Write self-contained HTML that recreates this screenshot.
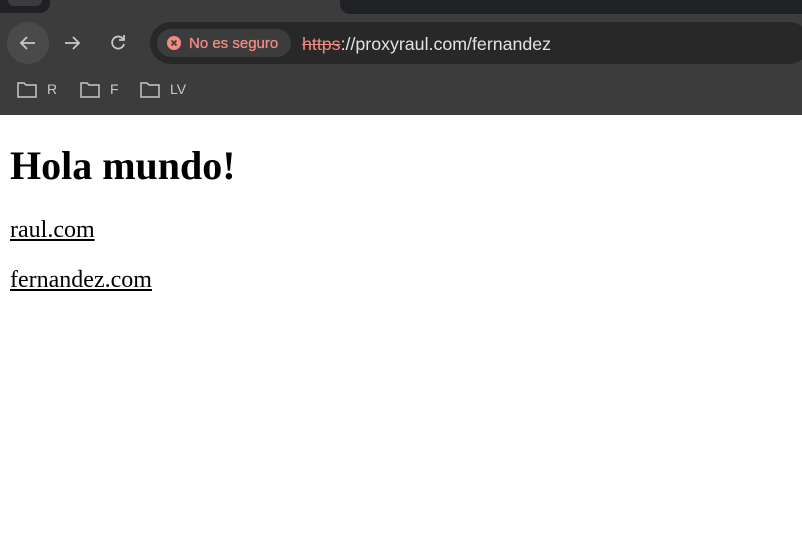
<!DOCTYPE html>
<html><head><style>
body{margin:0;width:802px;height:546px;position:relative;overflow:hidden;background:#fff;font-family:"Liberation Serif",serif}
.abs{position:absolute}
.ui{font-family:"Liberation Sans",sans-serif}
a{color:#000}
</style></head><body>
<div class="abs" style="left:0;top:0;width:802px;height:115px;background:#3c3c3c"></div>
<div class="abs" style="left:340px;top:0;width:462px;height:14px;background:#202124;border-bottom-left-radius:10px"></div>
<div class="abs" style="left:0;top:0;width:50px;height:13px;background:#202124;border-bottom-right-radius:10px"></div>
<div class="abs" style="left:8px;top:0;width:34px;height:6px;background:#3c3c3c;border-bottom-left-radius:6px;border-bottom-right-radius:6px"></div>
<div class="abs" style="left:7px;top:22px;width:42px;height:42px;border-radius:50%;background:#4a4a4a"></div>
<svg class="abs" style="left:0;top:0" width="150" height="115" fill="none" stroke="#c8c8c8" stroke-width="1.8">
<path d="M35 43H21M27 37l-6 6 6 6"/>
<path d="M65 43h14M73 37l6 6-6 6"/>
<path d="M123 39a6 6 0 1 0 1 5M124 35v5h-5"/>
</svg>
<div class="abs" style="left:150px;top:22px;width:660px;height:42px;border-radius:21px;background:#282828"></div>
<div class="abs" style="left:157px;top:29px;width:134px;height:28px;border-radius:14px;background:#3c3c3c"></div>
<svg class="abs" style="left:166px;top:35px" width="16" height="16"><circle cx="8" cy="8" r="7" fill="#f28b82"/><path d="M5.5 5.5l5 5M10.5 5.5l-5 5" stroke="#3c3c3c" stroke-width="1.8"/></svg>
<div class="abs ui" style="left:189px;top:35px;font-size:15px;color:#f28b82;-webkit-text-stroke:0.3px #f28b82">No es seguro</div>
<div class="abs ui" style="left:302px;top:34px;font-size:17.8px;color:#e3e3e3"><span style="color:#f28b82;text-decoration:line-through">https</span>://proxyraul.com/fernandez</div>
<svg class="abs" style="left:0;top:78px" width="200" height="24" fill="none" stroke="#c8c8c8" stroke-width="1.5">
<path d="M18 5h6l2 2h10v12H18z"/><path d="M81 5h6l2 2h10v12H81z"/><path d="M141 5h6l2 2h10v12h-18z"/>
</svg>
<div class="abs ui" style="left:47px;top:81px;font-size:14px;color:#c8c8c8">R</div>
<div class="abs ui" style="left:110px;top:81px;font-size:14px;color:#c8c8c8">F</div>
<div class="abs ui" style="left:170px;top:81px;font-size:14px;color:#c8c8c8">LV</div>
<div class="abs" style="left:10px;top:143px;font-size:40px;font-weight:bold;line-height:46px">Hola mundo!</div>
<div class="abs" style="left:10px;top:216px;font-size:24px;line-height:28px"><a href="#">raul.com</a></div>
<div class="abs" style="left:10px;top:266px;font-size:24px;line-height:28px"><a href="#">fernandez.com</a></div>
</body></html>
